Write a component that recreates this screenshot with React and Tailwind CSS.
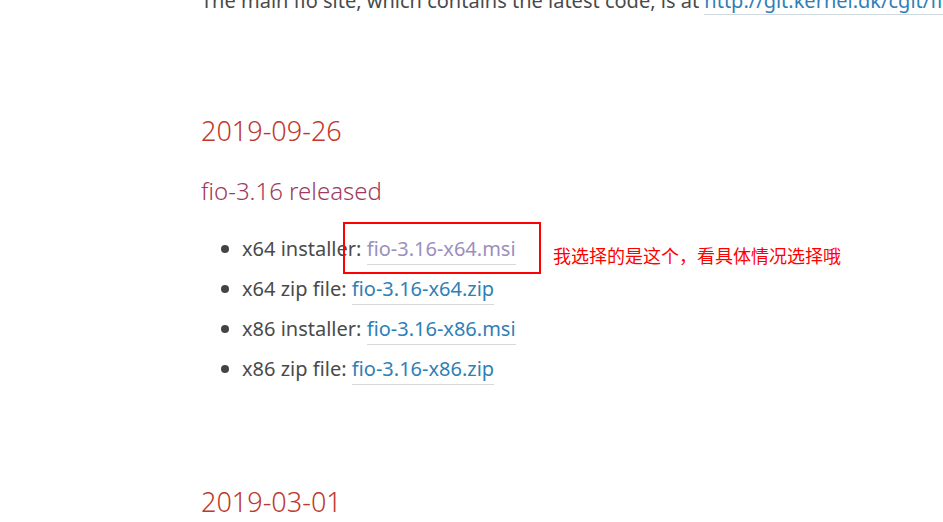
const files = [
  { label: 'x64 installer', name: 'fio-3.16-x64.msi', visited: true },
  { label: 'x64 zip file', name: 'fio-3.16-x64.zip' },
  { label: 'x86 installer', name: 'fio-3.16-x86.msi' },
  { label: 'x86 zip file', name: 'fio-3.16-x86.zip' },
];

export default function App() {
  return (
    <div className="w-[943px] h-[522px] overflow-hidden bg-white relative" style={{ fontFamily: '"Noto Sans", "Open Sans", sans-serif' }}>
      <div className="pl-[201px] flex flex-col">
        {/* cut-off intro line */}
        <p className="-mt-[14px] h-[34px] leading-[30px] text-[20px] text-[#4a4a4a] whitespace-nowrap">
          The main fio site, which contains the latest code, is at{' '}
          <a className="text-[#2f7fb6] border-b border-[#cfd8dc]">http://git.kernel.dk/cgit/fio/</a>
        </p>

        <h2 className="mt-[96px] h-[30px] leading-[30px] text-[27px] text-[#c0392b] font-light">2019-09-26</h2>
        <h3 className="mt-[30px] h-[30px] leading-[30px] text-[24px] text-[#a03a5a] font-light">fio-3.16 released</h3>

        <ul className="mt-[28px] flex flex-col text-[20px] text-[#4a4a4a]">
          {files.map((f) => (
            <li key={f.name} className="h-[40px] leading-[30px] flex items-start gap-[13px] pl-[20px]">
              <span className="mt-[11px] w-[8px] h-[8px] rounded-full bg-[#444]" />
              <span className="whitespace-nowrap">
                {f.label}:{' '}
                <a className={`border-b border-[#d5d9dc] pb-[2px] ${f.visited ? 'text-[#9b8fbd]' : 'text-[#2f7fb6]'}`}>{f.name}</a>
              </span>
            </li>
          ))}
        </ul>

        <h2 className="mt-[93px] h-[30px] leading-[30px] text-[27px] text-[#c0392b] font-light">2019-03-01</h2>
      </div>

      {/* annotation */}
      <div className="absolute left-[343px] top-[222px] w-[198px] h-[52px] border-2 border-[#ff0000]" />
      <span
        className="absolute left-[553px] top-[242px] text-[18px] leading-[26px] text-[#ff0000] whitespace-nowrap"
        style={{ fontFamily: '"Noto Sans CJK SC", sans-serif' }}
      >
        我选择的是这个，看具体情况选择哦
      </span>
    </div>
  );
}
